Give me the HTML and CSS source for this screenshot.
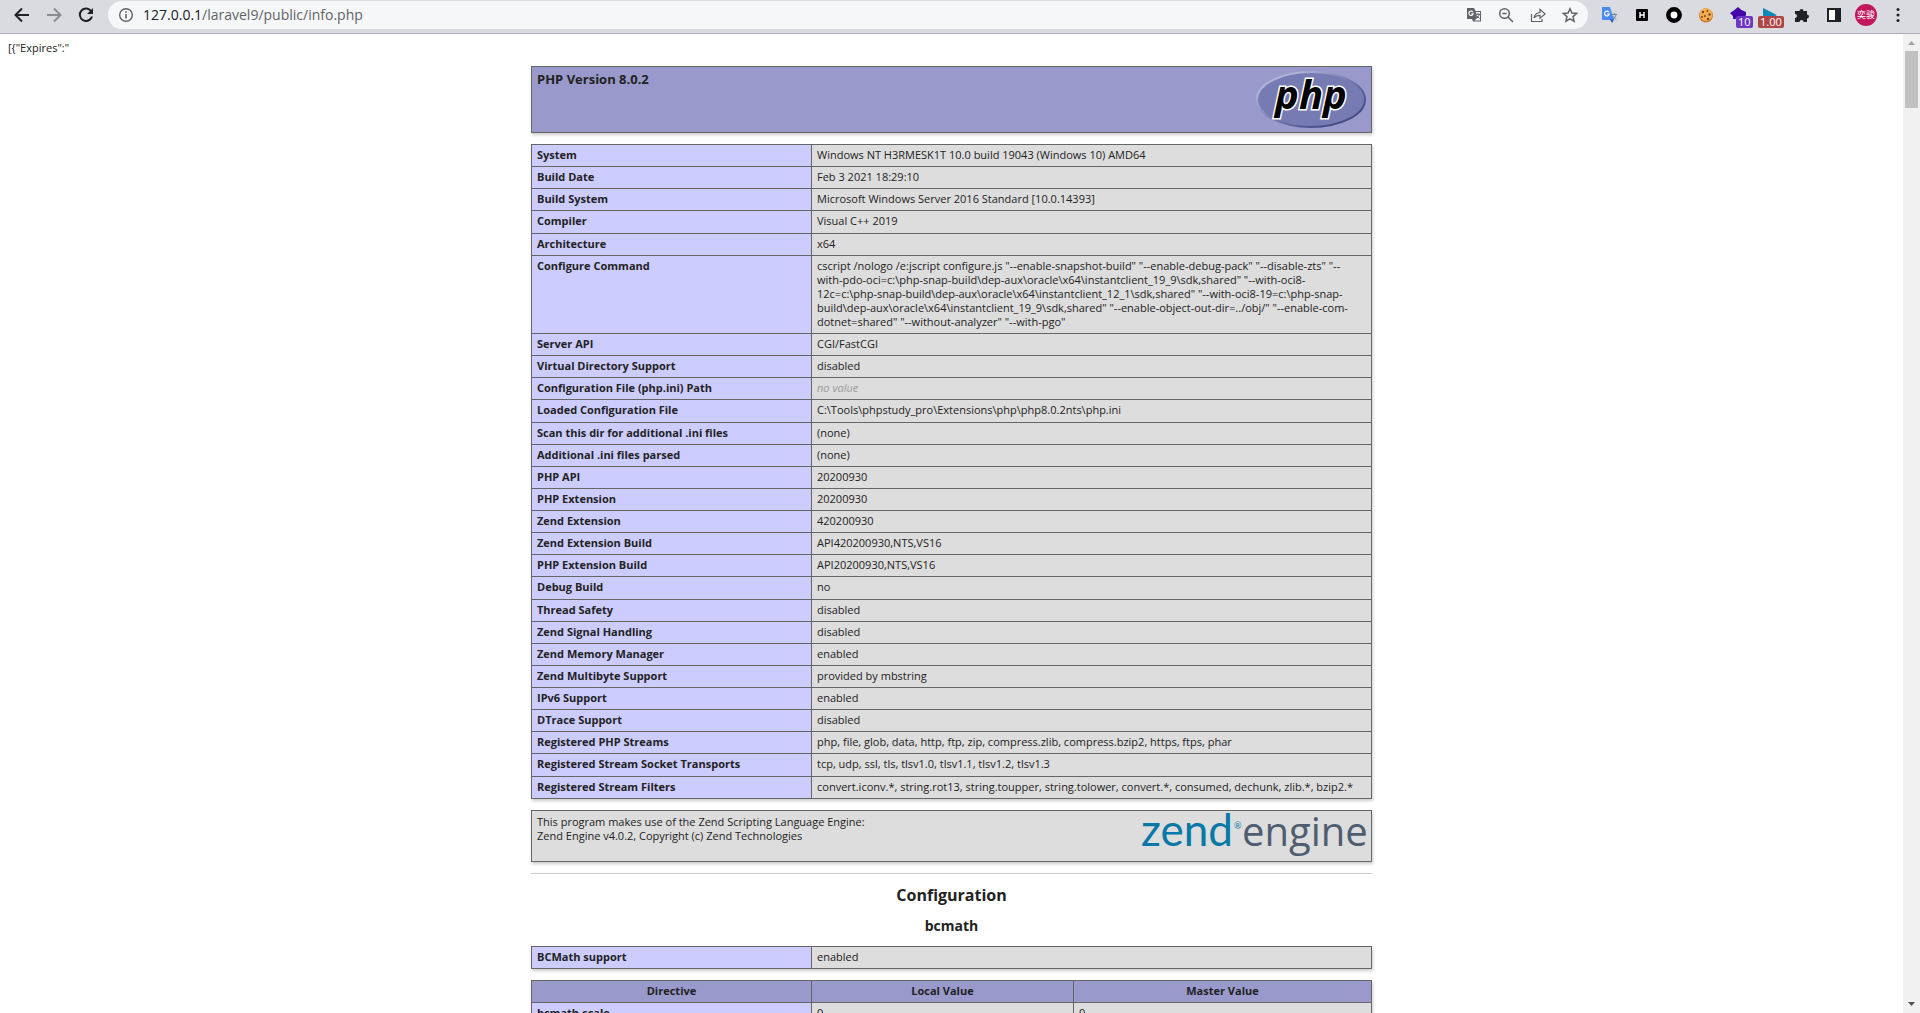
FILE: index.html
```html
<!DOCTYPE html>
<html lang="en">
<head>
<meta charset="utf-8">
<title>PHP 8.0.2 - phpinfo()</title>
<link rel="stylesheet" href="styles.css">
</head>
<body>
<header class="toolbar">
  <nav class="nav">
    <button class="icon" aria-label="Back"><svg width="16" height="16" viewBox="0 0 16 16"><path d="M15 8H2.500M8 1.500L1.500 8L8 14.500" fill="none" stroke="#202124" stroke-width="2"/></svg></button>
    <button class="icon" aria-label="Forward"><svg width="16" height="16" viewBox="0 0 16 16"><path d="M1 8H13.500M8 1.500L14.500 8L8 14.500" fill="none" stroke="#8a8c91" stroke-width="2"/></svg></button>
    <button class="icon" aria-label="Reload"><svg width="16" height="16" viewBox="0 0 16 16"><path d="M13.200 4.300A6.200 6.200 0 1 0 14 9.500" fill="none" stroke="#202124" stroke-width="2"/><path d="M15 1V7H9z" fill="#202124"/></svg></button>
  </nav>
  <div class="address">
    <svg width="16" height="16" viewBox="0 0 16 16"><circle cx="8" cy="8" r="6.300" fill="none" stroke="#5f6368" stroke-width="1.400"/><path d="M8 7v4.500M8 4.300v1.500" stroke="#5f6368" stroke-width="1.600"/></svg>
    <span class="url">127.0.0.1<span class="path">/laravel9/public/info.php</span></span>
    <div class="page-actions">
      <button class="icon" aria-label="Translate"><svg width="16" height="16" viewBox="0 0 16 16"><path d="M1 1h7l1.500 3H15v10.500H7L6 12H1z" fill="#5f6368"/><path d="M9.800 5H14v8.500H8.500L11 11z" fill="#f5f7f9"/><path d="M9.800 7.300H14M12 6v1.300M13.300 7.300c-.5 1.800-1.500 3-2.500 4M10.500 8.500l3 3" fill="none" stroke="#5f6368"/><path d="M7 5.200a2.200 2.200 0 1 0 .2 1.700H5.300" fill="none" stroke="#f5f7f9" stroke-width="1.200"/></svg></button>
      <button class="icon" aria-label="Zoom out"><svg width="16" height="16" viewBox="0 0 16 16"><circle cx="6.500" cy="6.500" r="4.800" fill="none" stroke="#5f6368" stroke-width="1.500"/><path d="M10 10l5 5M4.300 6.500h4.400" stroke="#5f6368" stroke-width="1.500"/></svg></button>
      <button class="icon" aria-label="Share"><svg width="16" height="16" viewBox="0 0 16 16"><path d="M1.500 7v7.500H12V12M4 11c.5-3.500 2.500-5.300 6-5.500V2.300L15.200 7L10 11.300V8.300C7.500 8.300 5.500 9 4 11z" fill="none" stroke="#5f6368" stroke-width="1.200"/></svg></button>
      <button class="icon" aria-label="Bookmark"><svg width="16" height="16" viewBox="0 0 16 16"><path d="M8 1.800l1.900 4.300 4.700.4-3.600 3.100 1.100 4.600L8 11.800l-4.100 2.400L5 9.600 1.400 6.500l4.700-.4z" fill="none" stroke="#5f6368" stroke-width="1.500"/></svg></button>
    </div>
  </div>
  <div class="extensions">
    <button class="icon" aria-label="Google Translate"><svg width="16" height="16" viewBox="0 0 16 16"><path d="M7 3h8.500v11.500H9z" fill="#d5d8dd"/><path d="M9.500 7.500H15M12.300 6v1.500M14 7.500c-.5 2-1.500 3.500-3 4.500M10.500 9l3.500 3.500" fill="none" stroke="#6d8a91"/><path d="M0 0h8l4 13H0z" fill="#4a8af4"/><path d="M8 12.500h4L10 16z" fill="#2b55c4"/><path d="M7 5.300a2.400 2.400 0 1 0 .3 1.700H5" fill="none" stroke="#fff" stroke-width="1.200"/></svg></button>
    <button class="icon" aria-label="HackBar"><svg width="16" height="16" viewBox="0 0 16 16"><rect x="2" y="2" width="12" height="12" rx="1" fill="#000"/><path d="M6 5v6M10 5v6M6 8h4" stroke="#fff" stroke-width="1.400"/></svg></button>
    <button class="icon" aria-label="Ring"><svg width="16" height="16" viewBox="0 0 16 16"><circle cx="8" cy="8" r="5.700" fill="#fff" stroke="#000" stroke-width="4.500"/></svg></button>
    <button class="icon" aria-label="Cookies"><svg width="16" height="16" viewBox="0 0 16 16"><circle cx="8" cy="8.500" r="7" fill="#c9792a"/><circle cx="8" cy="7.500" r="6.500" fill="#f3ae55"/><g fill="#7d4217"><circle cx="5" cy="5" r="1.200"/><circle cx="9.500" cy="4" r="1"/><circle cx="11.500" cy="7.500" r="1.200"/><circle cx="7" cy="9" r="1"/><circle cx="4" cy="10" r="1"/><circle cx="10" cy="12" r="1.200"/></g></svg></button>
    <button class="icon" aria-label="Extension, 10"><svg width="16" height="16" viewBox="0 0 16 16"><path d="M8 0l3.500 3L16 5v3l-2 4H3V9L0 6l4.500-3z" fill="#4505a8"/></svg><span class="badge purple">10</span></button>
    <button class="icon" aria-label="Speed, 1.00"><svg width="16" height="16" viewBox="0 0 16 16"><path d="M1 1l14 7-14 7z" fill="#0c87b8"/></svg><span class="badge red">1.00</span></button>
    <button class="icon" aria-label="Extensions"><svg width="16" height="16" viewBox="0 0 16 16"><path d="M1 4h4.500a2 2 0 1 1 4 0H13v3.500a2 2 0 1 1 0 4V15H9.500a2 2 0 0 0-4 0H1v-4a2 2 0 0 0 0-4z" fill="#202124"/></svg></button>
    <button class="icon" aria-label="Side panel"><svg width="16" height="16" viewBox="0 0 16 16"><path d="M1 1h14v14H1zM3 3v10h6V3z" fill="#202124" fill-rule="evenodd"/><path d="M3 3h6v10H3z" fill="#fff"/></svg></button>
    <button class="avatar" aria-label="Profile">奕骏</button>
    <button class="icon" aria-label="Menu"><svg width="16" height="16" viewBox="0 0 16 16"><g fill="#202124"><circle cx="8" cy="2.500" r="1.500"/><circle cx="8" cy="8" r="1.500"/><circle cx="8" cy="13.500" r="1.500"/></g></svg></button>
  </div>
</header>
<div class="viewport">
  <main class="page">
    <p class="stray">[{"Expires":"</p>
    <div class="center">
      <section class="box banner">
        <h1>PHP Version 8.0.2</h1>
        <svg class="logo" width="110" height="57" viewBox="0 0 110 57" role="img" aria-label="PHP logo">
          <defs><linearGradient id="rim" x1="0" y1="0" x2="1" y2="1"><stop offset=".2" stop-color="#aeb2d5"/><stop offset=".5" stop-color="#777bb3"/><stop offset=".8" stop-color="#484c89"/></linearGradient></defs>
          <ellipse cx="55" cy="28.500" rx="54" ry="27.500" fill="#777bb3" stroke="url(#rim)" stroke-width="2"/>
          <text class="php-word" x="55" y="38" text-anchor="middle">php</text>
        </svg>
      </section>
      <table class="info general">
        <tbody>
        <tr><th scope="row">System</th><td>Windows NT H3RMESK1T 10.0 build 19043 (Windows 10) AMD64</td></tr>
        <tr><th scope="row">Build Date</th><td>Feb 3 2021 18:29:10</td></tr>
        <tr><th scope="row">Build System</th><td>Microsoft Windows Server 2016 Standard [10.0.14393]</td></tr>
        <tr><th scope="row">Compiler</th><td>Visual C++ 2019</td></tr>
        <tr><th scope="row">Architecture</th><td>x64</td></tr>
        <tr><th scope="row">Configure Command</th><td>cscript /nologo /e:jscript configure.js "--enable-snapshot-build" "--enable-debug-pack" "--disable-zts" "--<br>with-pdo-oci=c:\php-snap-build\dep-aux\oracle\x64\instantclient_19_9\sdk,shared" "--with-oci8-<br>12c=c:\php-snap-build\dep-aux\oracle\x64\instantclient_12_1\sdk,shared" "--with-oci8-19=c:\php-snap-<br>build\dep-aux\oracle\x64\instantclient_19_9\sdk,shared" "--enable-object-out-dir=../obj/" "--enable-com-<br>dotnet=shared" "--without-analyzer" "--with-pgo"</td></tr>
        <tr><th scope="row">Server API</th><td>CGI/FastCGI</td></tr>
        <tr><th scope="row">Virtual Directory Support</th><td>disabled</td></tr>
        <tr><th scope="row">Configuration File (php.ini) Path</th><td><i>no value</i></td></tr>
        <tr><th scope="row">Loaded Configuration File</th><td>C:\Tools\phpstudy_pro\Extensions\php\php8.0.2nts\php.ini</td></tr>
        <tr><th scope="row">Scan this dir for additional .ini files</th><td>(none)</td></tr>
        <tr><th scope="row">Additional .ini files parsed</th><td>(none)</td></tr>
        <tr><th scope="row">PHP API</th><td>20200930</td></tr>
        <tr><th scope="row">PHP Extension</th><td>20200930</td></tr>
        <tr><th scope="row">Zend Extension</th><td>420200930</td></tr>
        <tr><th scope="row">Zend Extension Build</th><td>API420200930,NTS,VS16</td></tr>
        <tr><th scope="row">PHP Extension Build</th><td>API20200930,NTS,VS16</td></tr>
        <tr><th scope="row">Debug Build</th><td>no</td></tr>
        <tr><th scope="row">Thread Safety</th><td>disabled</td></tr>
        <tr><th scope="row">Zend Signal Handling</th><td>disabled</td></tr>
        <tr><th scope="row">Zend Memory Manager</th><td>enabled</td></tr>
        <tr><th scope="row">Zend Multibyte Support</th><td>provided by mbstring</td></tr>
        <tr><th scope="row">IPv6 Support</th><td>enabled</td></tr>
        <tr><th scope="row">DTrace Support</th><td>disabled</td></tr>
        <tr><th scope="row">Registered PHP Streams</th><td>php, file, glob, data, http, ftp, zip, compress.zlib, compress.bzip2, https, ftps, phar</td></tr>
        <tr><th scope="row">Registered Stream Socket Transports</th><td>tcp, udp, ssl, tls, tlsv1.0, tlsv1.1, tlsv1.2, tlsv1.3</td></tr>
        <tr><th scope="row">Registered Stream Filters</th><td>convert.iconv.*, string.rot13, string.toupper, string.tolower, convert.*, consumed, dechunk, zlib.*, bzip2.*</td></tr>
        </tbody>
      </table>
      <section class="box engine">
        <p>This program makes use of the Zend Scripting Language Engine:<br>Zend Engine v4.0.2, Copyright (c) Zend Technologies</p>
        <svg class="logo" width="226" height="43" viewBox="0 0 226 43" role="img" aria-label="Zend Engine logo">
          <text class="zend-word" x="0" y="31">zend</text>
          <text class="zend-mark" x="93" y="14">®</text>
          <text class="engine-word" x="101" y="31">engine</text>
        </svg>
      </section>
      <hr>
      <h2 class="title">Configuration</h2>
      <h3 class="module">bcmath</h3>
      <table class="info">
        <tbody><tr><th scope="row">BCMath support</th><td>enabled</td></tr></tbody>
      </table>
      <table class="info directives">
        <thead><tr><th scope="col">Directive</th><th scope="col" class="local">Local Value</th><th scope="col">Master Value</th></tr></thead>
        <tbody><tr><th scope="row">bcmath.scale</th><td>0</td><td>0</td></tr></tbody>
      </table>
    </div>
  </main>
  <div class="scrollbar" aria-hidden="true">
    <svg width="17" height="17" viewBox="0 0 17 17"><path d="M5 11h7L8.500 7z" fill="#a3a3a3"/></svg>
    <div class="thumb"></div>
    <svg class="down" width="17" height="17" viewBox="0 0 17 17"><path d="M5 6h7L8.500 10z" fill="#505050"/></svg>
  </div>
</div>
</body>
</html>
```
FILE: styles.css
```css
* { box-sizing: border-box; }

body {
  margin: 0;
  height: 100vh;
  display: flex;
  flex-direction: column;
  overflow: hidden;
  background: #fff;
  color: #222;
  font: 11px/14px "Open Sans", "Noto Sans CJK SC", sans-serif;
}

button {
  border: 0;
  padding: 0;
  background: none;
  font: inherit;
}

/* Browser toolbar */
.toolbar {
  flex: none;
  display: flex;
  align-items: center;
  height: 34px;
  padding: 0 14px 4px;
  background: #dadbe0;
  border-bottom: 1px solid #b1acb7;
}

.nav, .page-actions, .extensions {
  display: flex;
  align-items: center;
  gap: 16px;
}

.icon {
  position: relative;
  width: 16px;
  height: 16px;
}

.icon svg { display: block; }

.address {
  flex: 1;
  display: flex;
  align-items: center;
  gap: 9px;
  height: 28px;
  margin: 1px 14px 0;
  padding: 0 10px;
  border-radius: 14px;
  background: #f5f7f9;
}

.url {
  flex: 1;
  color: #202124;
  font-size: 14px;
  line-height: 20px;
}

.path { color: #5f6368; }

.badge {
  position: absolute;
  top: 9px;
  left: 6px;
  padding: 0 2px;
  border-radius: 2px;
  color: #fff;
  font-size: 11px;
  line-height: 12px;
}

.purple { background: #6b36c4; }

.red {
  left: -4px;
  background: #b04545;
}

.avatar {
  width: 22px;
  height: 22px;
  margin: 0 -3px;
  border-radius: 50%;
  background: #c2185b;
  color: #fff;
  font-size: 9px;
  white-space: nowrap;
}

/* Page area with its scrollbar */
.viewport {
  flex: 1;
  min-height: 0;
  display: flex;
}

.page {
  flex: 1;
  overflow: hidden;
}

.scrollbar {
  flex: none;
  display: flex;
  flex-direction: column;
  width: 17px;
  background: #f1f1f1;
}

.thumb {
  height: 57px;
  margin: 0 2px;
  background: #c1c1c1;
}

.down { margin-top: auto; }

.stray { margin: 7px 8px 11px; }

.center {
  max-width: 841px;
  margin: 0 auto;
}

.box, .info {
  width: 100%;
  margin: 0 0 11px;
  border: 1px solid #666;
  box-shadow: 1px 2px 3px #ccc;
}

.box {
  display: flex;
  justify-content: space-between;
  align-items: flex-start;
  padding: 4px 5px;
}

.banner { background: #99c; }

h1, .box p { margin: 0; }

h1 {
  font-size: 13px;
  line-height: 16px;
}

.logo { overflow: visible; }

.php-word {
  font: italic bold 40px "Open Sans", sans-serif;
  fill: #000;
  stroke: #fff;
  stroke-width: 3px;
  paint-order: stroke;
}

.info {
  border-collapse: collapse;
  table-layout: fixed;
}

.general { height: 655px; }

.info th, .info td {
  padding: 3px 5px 4px;
  border: 1px solid #666;
  text-align: left;
  vertical-align: baseline;
}

.info th {
  width: 280px;
  background: #ccf;
}

.info td { background: #ddd; }

.info i { color: #999; }

.info thead th {
  background: #99c;
  text-align: center;
}

.info .local { width: 262px; }

.info thead th:last-child { width: auto; }

.engine {
  padding: 4px 4px 3px 5px;
  background: #ddd;
}

.zend-word {
  font: 44px Lato, sans-serif;
  fill: #0679a8;
}

.zend-mark {
  font: 9px Lato, sans-serif;
  fill: #0679a8;
}

.engine-word {
  font: 40px "Open Sans", sans-serif;
  fill: #4e5d70;
}

hr {
  height: 1px;
  margin: 0;
  border: 0;
  background: #ccc;
}

.title {
  margin: 11px 0;
  font-size: 16px;
  line-height: 20px;
  text-align: center;
}

.module {
  margin: 0 0 10px;
  font-size: 14px;
  line-height: 20px;
  text-align: center;
}
```
